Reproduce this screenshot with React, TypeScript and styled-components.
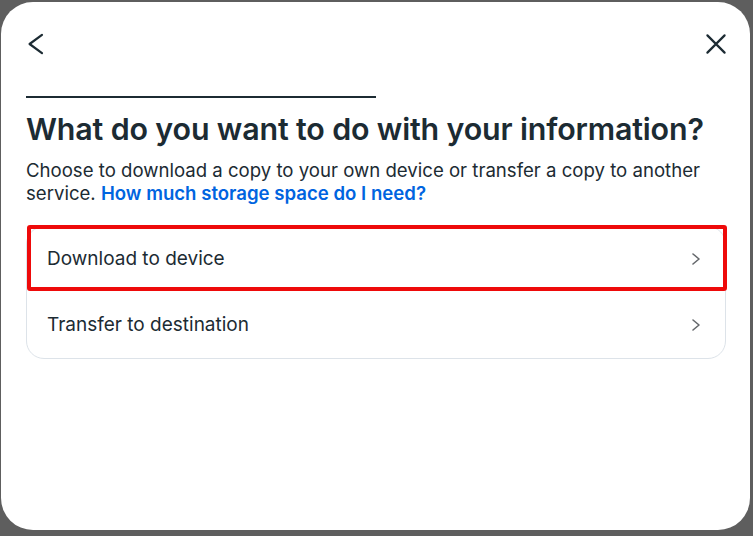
import React from "react";
import styled, { createGlobalStyle } from "styled-components";

const Global = createGlobalStyle`
  html, body { margin: 0; padding: 0; }
  body {
    background: #5e5e5e;
    font-family: Inter, "Noto Sans", "Liberation Sans", sans-serif;
    -webkit-font-smoothing: antialiased;
  }
  #root { width: 753px; height: 536px; }
`;

const Backdrop = styled.div`
  width: 753px;
  height: 536px;
  box-sizing: border-box;
  padding: 2px 3px 6px 1px;
  display: flex;
`;

const Dialog = styled.div`
  flex: 1;
  background: #ffffff;
  border-radius: 32px;
  box-sizing: border-box;
  padding: 30px 24px 0 25px;
  display: flex;
  flex-direction: column;
  color: #1c2b33;
`;

const Header = styled.div`
  display: flex;
  justify-content: space-between;
  align-items: center;
  height: 24px;
  margin-left: -2px;
  margin-right: -2px;
`;

const IconButton = styled.button`
  width: 24px;
  height: 24px;
  padding: 0;
  border: none;
  background: transparent;
  display: flex;
  align-items: center;
  justify-content: center;
  color: #1c2b33;
  cursor: pointer;
`;

const Progress = styled.div`
  margin-top: 40px;
  height: 2px;
  width: 100%;
  background: transparent;
`;

const ProgressFill = styled.div`
  height: 100%;
  background: #1c2b33;
`;

const Title = styled.h1`
  margin: 12px 0 0 0;
  font-size: 30.4px;
  line-height: 38px;
  font-weight: 600;
  letter-spacing: -0.15px;
  color: #1c2b33;
  white-space: nowrap;
`;

const Description = styled.p`
  margin: 10.5px 0 0 0;
  font-size: 18.6px;
  line-height: 23px;
  font-weight: 400;
  color: #1c2b33;
`;

const Link = styled.a`
  display: inline-block;
  line-height: 23px;
  color: #0064e0;
  font-weight: 600;
  text-decoration: none;
`;

const OptionList = styled.div`
  margin-top: 21px;
  border: 1px solid #dde3e9;
  border-radius: 18px;
  display: flex;
  flex-direction: column;
`;

const Option = styled.div`
  position: relative;
  height: 64px;
  display: flex;
  align-items: center;
  justify-content: space-between;
  padding: 0 24px 0 20px;
  font-size: 19px;
  color: #1c2b33;
  & + & {
    height: 66px;
    padding-top: 1px;
  }
`;

const Highlight = styled.div`
  position: absolute;
  left: 0;
  right: -2px;
  top: -2px;
  bottom: 0;
  border: 4px solid #ee0a0a;
  border-radius: 3px;
  pointer-events: none;
`;

const Chevron = () => (
  <svg width="10" height="14" viewBox="0 0 10 14" fill="none">
    <path d="M2 2 L8 7 L2 12" stroke="#65686c" strokeWidth="1.6" strokeLinecap="round" strokeLinejoin="round" />
  </svg>
);

export default function App() {
  return (
    <>
      <Global />
      <Backdrop>
        <Dialog>
          <Header>
            <IconButton aria-label="Back">
              <svg width="24" height="24" viewBox="0 0 24 24" fill="none">
                <path d="M18 2.8 L5.6 12 L18 21.2" stroke="#1c2b33" strokeWidth="2.2" strokeLinecap="round" strokeLinejoin="round" />
              </svg>
            </IconButton>
            <IconButton aria-label="Close">
              <svg width="24" height="24" viewBox="0 0 24 24" fill="none">
                <path d="M3.4 3.4 L20.6 20.6 M20.6 3.4 L3.4 20.6" stroke="#1c2b33" strokeWidth="2.2" strokeLinecap="round" />
              </svg>
            </IconButton>
          </Header>
          <Progress>
            <ProgressFill style={{ width: "50%" }} />
          </Progress>
          <Title>What do you want to do with your information?</Title>
          <Description>
            Choose to download a copy to your own device or transfer a copy to another service.{" "}
            <Link href="#">How much storage space do I need?</Link>
          </Description>
          <OptionList>
            <Option>
              <span>Download to device</span>
              <Chevron />
              <Highlight />
            </Option>
            <Option>
              <span>Transfer to destination</span>
              <Chevron />
            </Option>
          </OptionList>
        </Dialog>
      </Backdrop>
    </>
  );
}
